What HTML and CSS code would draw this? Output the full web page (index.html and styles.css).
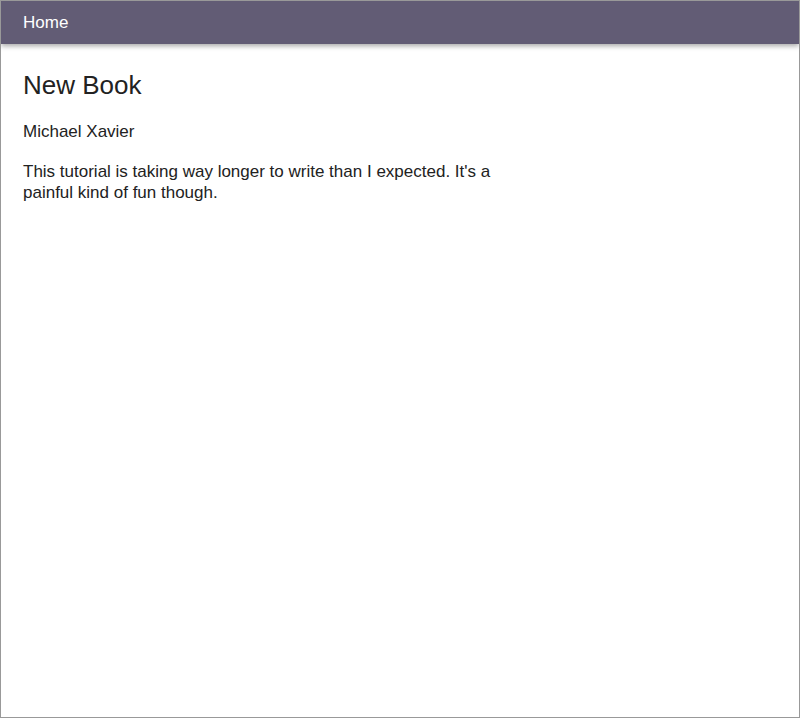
FILE: index.html
```html
<!DOCTYPE html>
<html>
<head>
<meta charset="utf-8">
<link rel="stylesheet" href="styles.css">
</head>
<body>
<div class="frame">
  <header class="topbar">
    <a class="home" href="#">Home</a>
  </header>
  <main class="content">
    <h1 class="title">New Book</h1>
    <p class="author">Michael Xavier</p>
    <p class="desc">This tutorial is taking way longer to write than I expected. It's a painful kind of fun though.</p>
  </main>
</div>
</body>
</html>
```
FILE: styles.css
```css
html, body {
  margin: 0;
  padding: 0;
  background: #fff;
}
body {
  font-family: "Liberation Sans", Arial, sans-serif;
  color: #222;
}
.frame {
  box-sizing: border-box;
  height: 718px;
  border: 1px solid #999;
  overflow: hidden;
}
.topbar {
  height: 43px;
  background: #625c75;
  display: flex;
  align-items: center;
  padding: 0 22px;
  box-shadow: 0 2px 5px rgba(0,0,0,0.35);
}
.home {
  color: #fff;
  text-decoration: none;
  font-size: 17px;
}
.content {
  padding: 24px 22px;
  max-width: 500px;
}
.title {
  font-size: 26px;
  font-weight: normal;
  margin: 2px 0 0;
  line-height: 30px;
}
.author {
  font-size: 17px;
  margin: 21px 0 0;
  line-height: 21px;
}
.desc {
  font-size: 17px;
  margin: 19px 0 0;
  line-height: 21px;
}
```
